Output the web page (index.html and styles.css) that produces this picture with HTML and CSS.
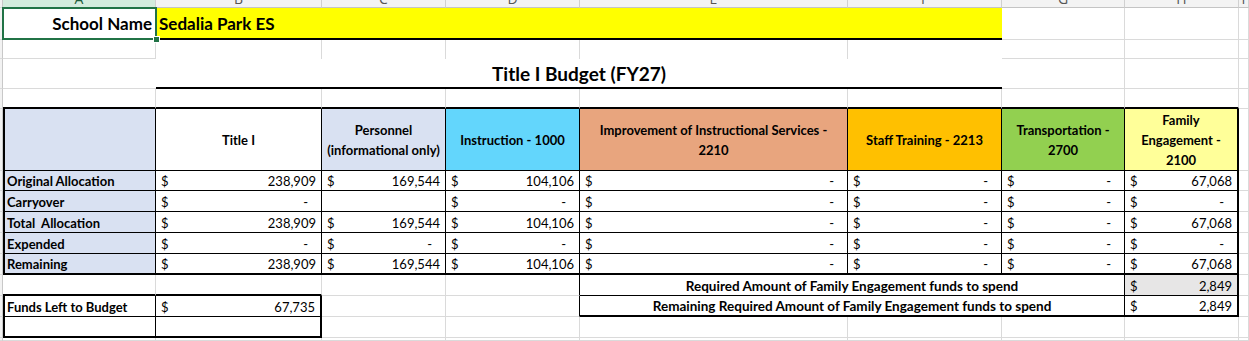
FILE: index.html
```html
<!DOCTYPE html>
<html>
<head>
<meta charset="utf-8">
<link rel="stylesheet" href="styles.css">
</head>
<body>
<div class="sheet">
  <div class="row rh">
    <div class="c stub"></div>
    <div class="c colh sel"><span>A</span></div>
    <div class="c colh"><span>B</span></div>
    <div class="c colh"><span>C</span></div>
    <div class="c colh"><span>D</span></div>
    <div class="c colh"><span>E</span></div>
    <div class="c colh"><span>F</span></div>
    <div class="c colh"><span>G</span></div>
    <div class="c colh"><span>H</span></div>
    <div class="c colh"><span>I</span></div>
  </div>

  <div class="row r1">
    <div class="c stub"></div>
    <div class="c school right">School Name</div>
    <div class="c school yellow s5 thickb">Sedalia Park ES</div>
    <div class="c"></div>
    <div class="c"></div>
    <div class="c"></div>
  </div>

  <div class="row r2">
    <div class="c stub"></div>
    <div class="c"></div>
    <div class="c nob"></div>
    <div class="c nob"></div>
    <div class="c nob"></div>
    <div class="c nob"></div>
    <div class="c nob nor"></div>
    <div class="c"></div>
    <div class="c"></div>
    <div class="c"></div>
  </div>

  <div class="row r3">
    <div class="c stub"></div>
    <div class="c nor"></div>
    <div class="c title s5 thickb nor">Title I Budget (FY27)</div>
    <div class="c"></div>
    <div class="c"></div>
    <div class="c"></div>
  </div>

  <div class="row r4">
    <div class="c stub"></div>
    <div class="c thickb"></div>
    <div class="c thickb"></div>
    <div class="c thickb"></div>
    <div class="c thickb"></div>
    <div class="c thickb"></div>
    <div class="c thickb"></div>
    <div class="c thickb"></div>
    <div class="c thickb"></div>
    <div class="c"></div>
  </div>

  <div class="row r5">
    <div class="c stub"></div>
    <div class="c t lav thickl"></div>
    <div class="c t hd">Title I</div>
    <div class="c t hd lav">Personnel<br>(informational only)</div>
    <div class="c t hd cyan">Instruction - 1000</div>
    <div class="c t hd salmon">Improvement of Instructional Services -<br>2210</div>
    <div class="c t hd gold">Staff Training - 2213</div>
    <div class="c t hd green">Transportation -<br>2700</div>
    <div class="c t hd lyel thickr">Family<br>Engagement -<br>2100</div>
    <div class="c"></div>
  </div>

  <div class="row r6">
    <div class="c stub"></div>
    <div class="c t lav thickl lbl">Original Allocation</div>
    <div class="c t m"><span>$</span><span>238,909</span></div>
    <div class="c t m"><span>$</span><span>169,544</span></div>
    <div class="c t m"><span>$</span><span>104,106</span></div>
    <div class="c t m"><span>$</span><span class="z">-</span></div>
    <div class="c t m"><span>$</span><span class="z">-</span></div>
    <div class="c t m"><span>$</span><span class="z">-</span></div>
    <div class="c t m thickr"><span>$</span><span>67,068</span></div>
    <div class="c"></div>
  </div>

  <div class="row r7">
    <div class="c stub"></div>
    <div class="c t lav thickl lbl">Carryover</div>
    <div class="c t m"><span>$</span><span class="z">-</span></div>
    <div class="c t m"></div>
    <div class="c t m"><span>$</span><span class="z">-</span></div>
    <div class="c t m"><span>$</span><span class="z">-</span></div>
    <div class="c t m"><span>$</span><span class="z">-</span></div>
    <div class="c t m"><span>$</span><span class="z">-</span></div>
    <div class="c t m thickr"><span>$</span><span class="z">-</span></div>
    <div class="c"></div>
  </div>

  <div class="row r8">
    <div class="c stub"></div>
    <div class="c t lav thickl lbl">Total&nbsp; Allocation</div>
    <div class="c t m"><span>$</span><span>238,909</span></div>
    <div class="c t m"><span>$</span><span>169,544</span></div>
    <div class="c t m"><span>$</span><span>104,106</span></div>
    <div class="c t m"><span>$</span><span class="z">-</span></div>
    <div class="c t m"><span>$</span><span class="z">-</span></div>
    <div class="c t m"><span>$</span><span class="z">-</span></div>
    <div class="c t m thickr"><span>$</span><span>67,068</span></div>
    <div class="c"></div>
  </div>

  <div class="row r9">
    <div class="c stub"></div>
    <div class="c t lav thickl lbl">Expended</div>
    <div class="c t m"><span>$</span><span class="z">-</span></div>
    <div class="c t m"><span>$</span><span class="z">-</span></div>
    <div class="c t m"><span>$</span><span class="z">-</span></div>
    <div class="c t m"><span>$</span><span class="z">-</span></div>
    <div class="c t m"><span>$</span><span class="z">-</span></div>
    <div class="c t m"><span>$</span><span class="z">-</span></div>
    <div class="c t m thickr"><span>$</span><span class="z">-</span></div>
    <div class="c"></div>
  </div>

  <div class="row r10">
    <div class="c stub"></div>
    <div class="c t lav thickl lbl thickb">Remaining</div>
    <div class="c t m thickb"><span>$</span><span>238,909</span></div>
    <div class="c t m thickb"><span>$</span><span>169,544</span></div>
    <div class="c t m thickb"><span>$</span><span>104,106</span></div>
    <div class="c t m thickb"><span>$</span><span class="z">-</span></div>
    <div class="c t m thickb"><span>$</span><span class="z">-</span></div>
    <div class="c t m thickb"><span>$</span><span class="z">-</span></div>
    <div class="c t m thickr thickb"><span>$</span><span>67,068</span></div>
    <div class="c"></div>
  </div>

  <div class="row r11">
    <div class="c stub"></div>
    <div class="c thickb"></div>
    <div class="c thickb"></div>
    <div class="c"></div>
    <div class="c br"></div>
    <div class="c t s3 req">Required Amount of Family Engagement funds to spend</div>
    <div class="c t m gray thickr"><span>$</span><span>2,849</span></div>
    <div class="c"></div>
  </div>

  <div class="row r12">
    <div class="c stub"></div>
    <div class="c t thickl lbl">Funds Left to Budget</div>
    <div class="c t m thickr"><span>$</span><span>67,735</span></div>
    <div class="c"></div>
    <div class="c br"></div>
    <div class="c t s3 req thickb">Remaining Required Amount of Family Engagement funds to spend</div>
    <div class="c t m thickr thickb"><span>$</span><span>2,849</span></div>
    <div class="c"></div>
  </div>

  <div class="row r13">
    <div class="c stub"></div>
    <div class="c t thickl thickb"></div>
    <div class="c t thickr thickb"></div>
    <div class="c"></div>
    <div class="c"></div>
    <div class="c"></div>
    <div class="c"></div>
    <div class="c"></div>
    <div class="c"></div>
    <div class="c"></div>
  </div>

  <div class="row r14">
    <div class="c stub"></div>
    <div class="c"></div>
    <div class="c"></div>
    <div class="c"></div>
    <div class="c"></div>
    <div class="c"></div>
    <div class="c"></div>
    <div class="c"></div>
    <div class="c"></div>
    <div class="c"></div>
  </div>

  <div class="selection"><div class="handle"></div></div>
</div>
</body>
</html>
```

FILE: styles.css
```css
html, body {
  margin: 0;
  padding: 0;
  background: #ffffff;
  overflow: hidden;
}

.sheet {
  position: relative;
  width: 1249px;
  height: 341px;
  font-family: Lato, "Liberation Sans", sans-serif;
  color: #000;
  overflow: hidden;
}

.row {
  display: grid;
  grid-template-columns: 3px 153px 166px 124px 134px 268px 154px 123px 114px 10px;
}

.rh { height: 8px; }
.r1 { height: 32px; }
.r2 { height: 19px; }
.r3 { height: 30px; }
.r4 { height: 20px; }
.r5 { height: 62px; }
.r6 { height: 20px; }
.r7, .r8, .r9, .r10, .r11, .r12, .r13 { height: 21px; }
.r14 { height: 3px; }

.c {
  box-sizing: border-box;
  border-right: 1px solid #dadada;
  border-bottom: 1px solid #dadada;
  min-width: 0;
  overflow: visible;
  white-space: nowrap;
  font-size: 14px;
}

.stub {
  background: #f2f2f2;
  border-right: 1px solid #c8c8c8;
  border-bottom: 1px solid #dadada;
}

/* column header strip */
.colh {
  background: #f3f3f3;
  border-right: 1px solid #d0d0d0;
  border-bottom: 1px solid #c4c4c4;
  display: flex;
  justify-content: center;
  align-items: flex-start;
  overflow: hidden;
  font-family: "Open Sans", sans-serif;
  font-size: 14px;
  color: #555;
}
.colh span {
  line-height: 14px;
  margin-top: -8px;
}
.colh.sel {
  background: #d3ecdd;
  color: #1d5e3a;
}

.s5 { grid-column: span 5; }
.s3 { grid-column: span 3; }

.nob { border-bottom: none; }
.nor { border-right: none; }

.thickb { border-bottom: 2px solid #000; }
.thickl { border-left: 2px solid #000; }
.thickr { border-right: 2px solid #000; }
.br { border-right: 1px solid #000; }

.school {
  font-weight: 700;
  font-size: 17px;
  display: flex;
  align-items: center;
  padding: 0 3px;
}
.school.right { justify-content: flex-end; }
.yellow { background: #ffff00; border-right: none; }

.title {
  font-weight: 700;
  font-size: 19px;
  display: flex;
  align-items: center;
  justify-content: center;
}

/* table cells */
.t {
  border-right: 1px solid #000;
  border-bottom: 1px solid #000;
}
.t.thickr { border-right: 2px solid #000; }
.t.thickb { border-bottom: 2px solid #000; }

.hd {
  display: flex;
  align-items: center;
  justify-content: center;
  text-align: center;
  font-weight: 700;
  font-size: 13px;
  line-height: 20px;
}

.lav { background: #d9e1f2; }
.cyan { background: #63d6fc; }
.salmon { background: #e8a57e; }
.gold { background: #ffc000; }
.green { background: #92d050; }
.lyel { background: #ffff99; }
.gray { background: #e7e6e6; }

.lbl {
  display: flex;
  align-items: flex-end;
  font-weight: 700;
  font-size: 13px;
  line-height: 18px;
  padding-left: 2px;
}

.m {
  display: flex;
  justify-content: space-between;
  align-items: flex-end;
  font-size: 13px;
  line-height: 18px;
  padding: 0 5px 0 5px;
}
.m .z { padding-right: 8px; }

.req {
  display: flex;
  justify-content: center;
  align-items: flex-end;
  font-weight: 700;
  font-size: 13.5px;
  line-height: 18px;
}

/* selection overlay (active cell A1) */
.selection {
  position: absolute;
  left: 2px;
  top: 7px;
  width: 155px;
  height: 33px;
  box-sizing: border-box;
  border: 2px solid #217346;
}
.handle {
  position: absolute;
  right: -5px;
  bottom: -5px;
  width: 5px;
  height: 5px;
  background: #217346;
  border: 1px solid #fff;
}
```
